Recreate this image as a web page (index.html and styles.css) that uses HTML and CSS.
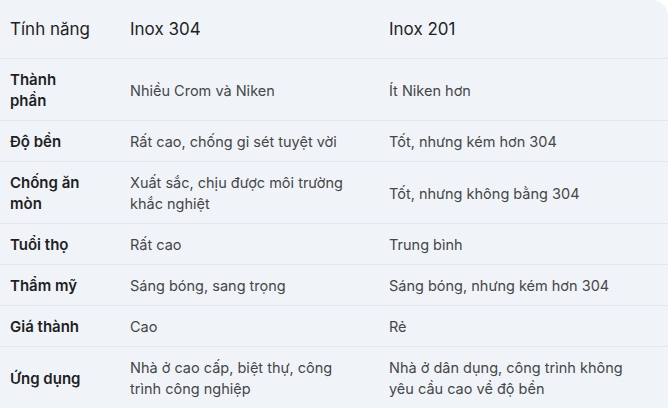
FILE: index.html
```html
<!DOCTYPE html>
<html lang="vi">
<head>
<meta charset="utf-8">
<link rel="stylesheet" href="styles.css">
</head>
<body>
<div class="card">
<table class="cmp">
<colgroup><col class="c1"><col class="c2"><col class="c3"></colgroup>
<thead>
<tr><th>Tính năng</th><th>Inox 304</th><th>Inox 201</th></tr>
</thead>
<tbody>
<tr><td class="k">Thành phần</td><td>Nhiều Crom và Niken</td><td>Ít Niken hơn</td></tr>
<tr><td class="k">Độ bền</td><td>Rất cao, chống gỉ sét tuyệt vời</td><td>Tốt, nhưng kém hơn 304</td></tr>
<tr><td class="k">Chống ăn mòn</td><td>Xuất sắc, chịu được môi trường khắc nghiệt</td><td>Tốt, nhưng không bằng 304</td></tr>
<tr><td class="k">Tuổi thọ</td><td>Rất cao</td><td>Trung bình</td></tr>
<tr><td class="k">Thẩm mỹ</td><td>Sáng bóng, sang trọng</td><td>Sáng bóng, nhưng kém hơn 304</td></tr>
<tr><td class="k">Giá thành</td><td>Cao</td><td>Rẻ</td></tr>
<tr><td class="k">Ứng dụng</td><td>Nhà ở cao cấp, biệt thự, công trình công nghiệp</td><td>Nhà ở dân dụng, công trình không yêu cầu cao về độ bền</td></tr>
</tbody>
</table>
</div>
</body>
</html>
```
FILE: styles.css
```css
html, body {
  margin: 0;
  padding: 0;
  background: #ffffff;
}
.card {
  width: 668px;
  height: 420px;
  background: #f0f4f9;
  border-top-right-radius: 16px;
  overflow: hidden;
}
.cmp {
  width: 668px;
  border-collapse: collapse;
  table-layout: fixed;
  font-family: Inter, "Noto Sans", sans-serif;
}
.c1 { width: 120px; }
.c2 { width: 259px; }
.c3 { width: 289px; }
.cmp th {
  text-align: left;
  font-weight: 400;
  font-size: 17px;
  color: #1f1f1f;
  height: 58px;
  padding: 0 24px 0 10px;
  border-bottom: 1px solid #e2e7ed;
}
.cmp td {
  font-size: 14.5px;
  line-height: 21px;
  color: #444746;
  padding: 10px 24px 9px 10px;
  border-bottom: 1px solid #e2e7ed;
  vertical-align: middle;
}
.cmp td:last-child {
  padding-right: 28px;
}
.cmp td.k {
  font-size: 15px;
  font-weight: 600;
  color: #1f1f1f;
  padding-right: 30px;
}
```
